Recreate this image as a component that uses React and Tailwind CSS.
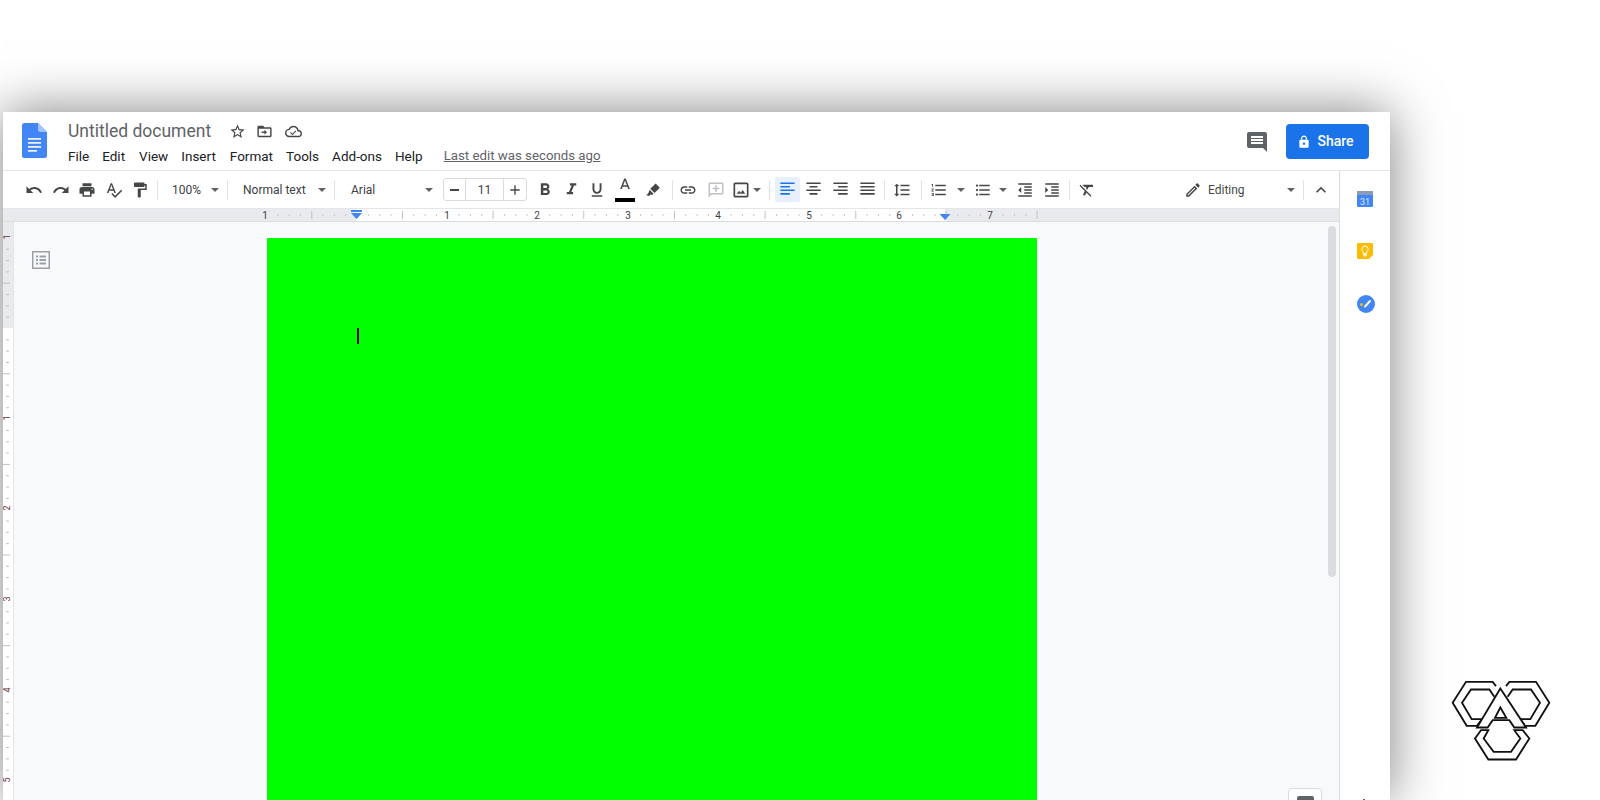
import React from "react";

const P = {
  undo: "M12.5 8c-2.65 0-5.05.99-6.9 2.6L2 7v9h9l-3.62-3.62c1.39-1.16 3.16-1.88 5.12-1.88 3.54 0 6.55 2.31 7.6 5.5l2.37-.78C21.08 11.03 17.15 8 12.5 8z",
  redo: "M18.4 10.6C16.55 8.99 14.15 8 11.5 8c-4.65 0-8.58 3.03-9.96 7.22L3.9 16c1.05-3.19 4.05-5.5 7.6-5.5 1.95 0 3.73.72 5.12 1.88L13 16h9V7l-3.6 3.6z",
  print: "M19 8H5c-1.66 0-3 1.34-3 3v6h4v4h12v-4h4v-6c0-1.66-1.34-3-3-3zm-3 11H8v-5h8v5zm3-7c-.55 0-1-.45-1-1s.45-1 1-1 1 .45 1 1-.45 1-1 1zm-1-9H6v4h12V3z",
  spell: "M12.45 16h2.09L9.43 3H7.57L2.46 16h2.09l1.12-3h5.64l1.14 3zm-6.02-5L8.5 5.48 10.57 11H6.43zm15.16.59l-8.09 8.09L9.83 16l-1.41 1.41 5.09 5.09L23 13l-1.41-1.41z",
  paint: "M18 4V3c0-.55-.45-1-1-1H5c-.55 0-1 .45-1 1v4c0 .55.45 1 1 1h12c.55 0 1-.45 1-1V6h1v4H9v11c0 .55.45 1 1 1h2c.55 0 1-.45 1-1v-9h8V4h-3z",
  bold: "M15.6 10.79c.97-.67 1.65-1.77 1.65-2.79 0-2.26-1.75-4-4-4H7v14h7.04c2.09 0 3.71-1.7 3.71-3.79 0-1.52-.86-2.82-2.15-3.42zM10 6.5h3c.83 0 1.5.67 1.5 1.5s-.67 1.5-1.5 1.5h-3v-3zm3.5 9H10v-3h3.5c.83 0 1.5.67 1.5 1.5s-.67 1.5-1.5 1.500z",
  italic: "M10 4v3h2.21l-3.42 8H6v3h8v-3h-2.21l3.42-8H18V4z",
  underline: "M12 17c3.31 0 6-2.69 6-6V3h-2.5v8c0 1.93-1.57 3.5-3.5 3.5S8.5 12.93 8.5 11V3H6v8c0 3.31 2.69 6 6 6zm-7 2v2h14v-2H5z",
  textColor: "M11 2L5.5 16h2.25l1.12-3h6.25l1.12 3h2.25L13 2h-2zm-1.38 9L12 4.67 14.38 11H9.62z",
  marker: "M15 3.5l6 6-7.5 7.5-6-6zM6.500 12.5l5.5 5.5-1.5 1.5H7l-1 1.5-4-1 3-3.500z",
  link: "M3.9 12c0-1.71 1.39-3.1 3.1-3.1h4V7H7c-2.76 0-5 2.24-5 5s2.24 5 5 5h4v-1.9H7c-1.71 0-3.1-1.39-3.1-3.1zM8 13h8v-2H8v2zm9-6h-4v1.9h4c1.71 0 3.1 1.39 3.1 3.1s-1.39 3.1-3.1 3.1h-4V17h4c2.76 0 5-2.24 5-5s-2.24-5-5-5z",
  comment: "M20 2H4c-1.1 0-2 .9-2 2v18l4-4h14c1.1 0 2-.9 2-2V4c0-1.1-.9-2-2-2zm0 14H5.2L4 17.2V4h16v12zM11 5.5h2V9h3.5v2H13v3.5h-2V11H7.5V9H11z",
  image: "M19 3H5c-1.1 0-2 .9-2 2v14c0 1.1.9 2 2 2h14c1.1 0 2-.9 2-2V5c0-1.1-.9-2-2-2zm0 16H5V5h14v14zM14.1 11.9l-2.6 3.3-1.8-2.2L7 16.5h10z",
  alignLeft: "M3 3h18v2H3zM3 7.5h12v2H3zM3 12h18v2H3zM3 16.5h12v2H3z",
  alignCenter: "M3 3h18v2H3zM7 7.5h10v2H7zM3 12h18v2H3zM7 16.5h10v2H7z",
  alignRight: "M3 3h18v2H3zM9 7.5h12v2H9zM3 12h18v2H3zM9 16.5h12v2H9z",
  justify: "M3 3h18v2H3zM3 7.5h18v2H3zM3 12h18v2H3zM3 16.5h18v2H3z",
  lineSpace: "M6 7h2.5L5 3.5 1.5 7H4v10H1.5L5 20.5 8.5 17H6V7zm4-2v2h12V5H10zm0 14h12v-2H10v2zm0-6h12v-2H10v2z",
  numbered: "M2 17h2v.5H3v1h1v.5H2v1h3v-4H2v1zm1-9h1V4H2v1h1v3zm-1 3h1.8L2 13.1v.9h3v-1H3.2L5 10.9V10H2v1zm5-6v2h14V5H7zm0 14h14v-2H7v2zm0-6h14v-2H7v2z",
  bullets: "M4 10.5c-.83 0-1.5.67-1.5 1.5s.67 1.5 1.5 1.5 1.5-.67 1.5-1.5-.67-1.5-1.5-1.5zm0-6c-.83 0-1.5.67-1.5 1.5S3.17 7.5 4 7.5 5.5 6.83 5.5 6 4.83 4.5 4 4.5zm0 12c-.83 0-1.5.68-1.5 1.5s.68 1.5 1.5 1.5 1.5-.68 1.5-1.5-.67-1.5-1.5-1.5zM7 19h14v-2H7v2zm0-6h14v-2H7v2zm0-8v2h14V5H7z",
  outdent: "M11 17h10v-2H11v2zm-8-5l4 4V8l-4 4zm0 9h18v-2H3v2zM3 3v2h18V3H3zm8 6h10V7H11v2zm0 4h10v-2H11v2z",
  indent: "M3 21h18v-2H3v2zM3 8v8l4-4-4-4zm8 9h10v-2H11v2zM3 3v2h18V3H3zm8 6h10V7H11v2zm0 4h10v-2H11v2z",
  clear: "M3.27 5L2 6.27l6.97 6.97L6.5 19h3l1.57-3.66L16.73 21 18 19.73 3.55 5.27 3.27 5zM6 5v.18L8.82 8h2.4l-.72 1.68 2.1 2.1L14.21 8H20V5H6z",
  pencil: "M14.06 9.02l.92.92L5.92 19H5v-.92l9.06-9.06M17.66 3c-.25 0-.51.1-.7.29l-1.83 1.83 3.75 3.75 1.83-1.83c.39-.39.39-1.02 0-1.41l-2.34-2.34c-.2-.2-.45-.29-.71-.29zm-3.6 3.19L3 17.25V21h3.75L17.81 9.94l-3.75-3.75z",
  chevronUp: "M7.41 15.41L12 10.83l4.59 4.58L18 14l-6-6-6 6z",
  chat: "M21.99 4c0-1.1-.89-2-1.99-2H4c-1.1 0-2 .9-2 2v12c0 1.1.9 2 2 2h14l4 4-.01-18zM18 14H6v-2h12v2zm0-3H6V9h12v2zm0-3H6V6h12v2z",
  lock: "M18 8h-1V6c0-2.76-2.24-5-5-5S7 3.24 7 6v2H6c-1.1 0-2 .9-2 2v10c0 1.1.9 2 2 2h12c1.1 0 2-.9 2-2V10c0-1.1-.9-2-2-2zm-6 9c-1.1 0-2-.9-2-2s.9-2 2-2 2 .9 2 2-.9 2-2 2zm3.1-9H8.9V6c0-1.71 1.39-3.1 3.1-3.1 1.71 0 3.1 1.39 3.1 3.1v2z",
  star: "M22 9.24l-7.19-.62L12 2 9.19 8.63 2 9.24l5.46 4.73L5.82 21 12 17.27 18.18 21l-1.63-7.03L22 9.24zM12 15.4l-3.76 2.27 1-4.28-3.32-2.88 4.38-.38L12 6.1l1.71 4.04 4.38.38-3.32 2.88 1 4.28L12 15.4z",
  folder: "M20 6h-8l-2-2H4c-1.1 0-2 .9-2 2v12c0 1.1.9 2 2 2h16c1.1 0 2-.9 2-2V8c0-1.1-.9-2-2-2zm0 12H4V8h16v10zM8 12h4V9.5l3.5 3.5-3.5 3.5V14H8z",
  cloud: "M19.35 10.04C18.67 6.59 15.64 4 12 4 9.11 4 6.6 5.64 5.35 8.04 2.34 8.36 0 10.91 0 14c0 3.31 2.69 6 6 6h13c2.76 0 5-2.24 5-5 0-2.64-2.05-4.78-4.65-4.96zM19 18H6c-2.21 0-4-1.79-4-4s1.79-4 4-4h.71C7.37 7.69 9.48 6 12 6c3.04 0 5.5 2.46 5.5 5.5v.5H19c1.66 0 3 1.34 3 3s-1.34 3-3 3zM10.5 15l-2.3-2.3-1.1 1.1 3.4 3.4 5.4-5.4-1.1-1.1z",
  outline: "M3 3h18v18H3zM4.500 4.500v15h15v-15zM7 7.500h2v2H7zM10.500 7.500H17v2h-6.500zM7 11h2v2H7zM10.500 11H17v2h-6.500zM7 14.500h2v2H7zM10.500 14.500H17v2h-6.500z",
};

function Icon({ d, size = 18, className = "fill-[#444746]" }) {
  return (
    <svg viewBox="0 0 24 24" width={size} height={size} fillRule="evenodd" className={className}>
      <path d={d} />
    </svg>
  );
}

function Btn({ d, size = 18, className = "", color }) {
  return (
    <div className={`w-[26px] h-[26px] shrink-0 flex items-center justify-center ${className}`}>
      <Icon d={d} size={size} className={color || "fill-[#444746]"} />
    </div>
  );
}

function Caret({ className = "" }) {
  return (
    <div className={`w-[10px] shrink-0 flex justify-center ${className}`}>
      <div className="w-0 h-0 border-l-[4px] border-r-[4px] border-t-[4px] border-l-transparent border-r-transparent border-t-[#5f6368]" />
    </div>
  );
}

function Sep({ className = "" }) {
  return <div className={`w-px h-[20px] bg-[#e0e2e5] shrink-0 ${className}`} />;
}

function HRuler() {
  const zero = 353.6; // svg x of the 0 mark, ruler starts at page x 3
  const ticks = [];
  for (let i = -7; i <= 60; i++) {
    const x = zero + (i * 90.67) / 8;
    if (i % 8 === 0) continue;
    const long = i % 4 === 0;
    ticks.push(<rect key={i} x={x} y={long ? 3 : 6} width="1" height={long ? 8 : 2} fill={long ? "#bdc1c6" : "#c4c7cb"} />);
  }
  const nums = [
    [262, "1"],
    [444, "1"],
    [534, "2"],
    [625, "3"],
    [715, "4"],
    [806, "5"],
    [896, "6"],
    [987, "7"],
  ];
  return (
    <svg width="1336" height="14" className="block shrink-0">
      <rect width="1336" height="14" fill="#e8eaed" />
      <rect x="353" y="0" width="589" height="13" fill="#ffffff" />
      <rect x="0" y="0" width="1336" height="1" fill="#e3e5e8" />
      <rect x="0" y="13" width="1336" height="1" fill="#dadce0" />
      {ticks}
      {nums.map(([x, t], i) => (
        <text key={i} x={x} y="11" textAnchor="middle" fontSize="10" fontFamily="Roboto, sans-serif" fill="#3c4043">
          {t}
        </text>
      ))}
      <path d="M348 2h11v2h-11zM348 5h11l-5.5 6z" fill="#4285f4" />
      <path d="M936.5 6h11l-5.500 6z" fill="#4285f4" />
    </svg>
  );
}

function VRuler() {
  const ticks = [];
  for (let i = -8; i <= 40; i++) {
    const y = 106 + (i * 90.6) / 8;
    if (i % 8 === 0) continue;
    const long = i % 4 === 0;
    ticks.push(<rect key={i} x={long ? 0 : 3} y={y} width={long ? 7 : 3} height="1" fill="#bdc1c6" />);
  }
  const nums = [
    [15, "1"],
    [196, "1"],
    [286, "2"],
    [377, "3"],
    [468, "4"],
    [558, "5"],
  ];
  return (
    <svg width="11" height="578" className="block shrink-0">
      <rect width="11" height="578" fill="#ffffff" />
      <rect width="11" height="106" fill="#e8eaed" />
      <rect x="10" width="1" height="578" fill="#e3e5e8" />
      {ticks}
      {nums.map(([y, t], i) => (
        <text key={i} x="5" y={y} textAnchor="middle" dominantBaseline="middle" fontSize="9" fontFamily="Roboto, sans-serif" fill="#6b2b3a" transform={`rotate(-90 5 ${y})`}>
          {t}
        </text>
      ))}
    </svg>
  );
}

function DocsLogo() {
  return (
    <svg width="25" height="35" viewBox="0 0 25 35" className="shrink-0">
      <path d="M2.5 0H16l9 9v23.500a2.500 2.500 0 0 1-2.500 2.500h-20A2.500 2.500 0 0 1 0 32.500v-30A2.500 2.500 0 0 1 2.500 0z" fill="#4285f4" />
      <path d="M16 0l9 9h-6.500A2.500 2.500 0 0 1 16 6.500z" fill="#a1c2fa" />
      <path d="M6 15h13v1.800H6zM6 19h13v1.800H6zM6 23h13v1.800H6zM6 27h9v1.800H6z" fill="#f1f1f1" />
    </svg>
  );
}

function HexLogo() {
  const bands = [
    "M285 108L275 95H195L155 158L197 227H228L243 207H212L183 158L210 118H265L280 140",
    "M315 108L325 95H405L445 158L403 227H372L357 207H388L417 158L390 118H335L320 140",
    "M240 240L222 265L262 328H345L385 265L365 240H340L358 265L330 305H278L248 265L262 240Z",
  ];
  return (
    <svg viewBox="150 90 300 245" width="100" height="82" className="absolute left-[1451px] top-[680px]">
      {bands.map((d) => (
        <path key={d} d={d} fill="none" stroke="#111" strokeWidth="5.5" />
      ))}
      <path d="M298 115L318 145L375 232H340L325 210H275L260 232H228L280 145Z" fill="#fff" stroke="#111" strokeWidth="5.5" />
      <path d="M298 172L282 203H316Z" fill="#fff" stroke="#111" strokeWidth="5.5" />
    </svg>
  );
}

function Header() {
  const menu = [
    ["File", "ml-0"],
    ["Edit", "ml-[13px]"],
    ["View", "ml-[14px]"],
    ["Insert", "ml-[13px]"],
    ["Format", "ml-[14px]"],
    ["Tools", "ml-[13px]"],
    ["Add-ons", "ml-[13px]"],
    ["Help", "ml-[13px]"],
  ];
  return (
    <div className="h-[59px] shrink-0 flex items-start border-b border-[#e3e5e8] pl-[19px] pr-[21px]">
      <div className="mt-[11px]">
        <DocsLogo />
      </div>
      <div className="ml-[21px] flex flex-col">
        <div className="flex items-center h-[20px] mt-[9px]">
          <span className="text-[17.500px] leading-[20px] text-[#5f6368] w-[160px]">Untitled document</span>
          <Icon d={P.star} size={17} className="fill-[#444746] ml-[1px]" />
          <Icon d={P.folder} size={17} className="fill-[#444746] ml-[10px]" />
          <Icon d={P.cloud} size={17} className="fill-[#444746] ml-[12px]" />
        </div>
        <div className="flex items-center h-[20px] mt-[5px] text-[13.500px] leading-[20px] text-[#202124]">
          {menu.map(([t, c]) => (
            <span key={t} className={c}>{t}</span>
          ))}
          <span className="ml-[21px] text-[13.250px] text-[#5f6368] underline">Last edit was seconds ago</span>
        </div>
      </div>
      <div className="ml-auto flex items-center mt-[12px]">
        <Icon d={P.chat} size={24} className="fill-[#5f6368]" />
        <button className="ml-[17px] w-[83px] h-[35px] rounded-[4px] bg-[#1a73e8] text-white text-[14px] font-medium flex items-center justify-center gap-[6px] pr-[4px]">
          <Icon d={P.lock} size={14} className="fill-white" />
          Share
        </button>
      </div>
    </div>
  );
}

function Toolbar() {
  return (
    <div className="h-[37px] shrink-0 flex items-center pl-[18px] pr-[8px] text-[12px] text-[#3c4043]">
      <Btn d={P.undo} />
      <Btn d={P.redo} className="ml-px" />
      <Btn d={P.print} />
      <Btn d={P.spell} className="ml-px" />
      <Btn d={P.paint} />
      <Sep className="ml-[4px]" />
      <span className="ml-[14px] w-[38px]">100%</span>
      <Caret />
      <Sep className="ml-[7px]" />
      <span className="ml-[15px] w-[74px]">Normal text</span>
      <Caret />
      <Sep className="ml-[7px]" />
      <span className="ml-[16px] w-[73px]">Arial</span>
      <Caret />
      <div className="ml-[9px] w-[84px] h-[23px] border border-[#dadce0] rounded-[3px] flex items-center shrink-0">
        <div className="w-[22px] h-full flex items-center justify-center border-r border-[#dadce0]">
          <div className="w-[9px] h-[2px] bg-[#444746]" />
        </div>
        <div className="flex-1 text-center text-[12px] text-[#3c4043]">11</div>
        <div className="w-[23px] h-full flex items-center justify-center border-l border-[#dadce0]">
          <Icon d="M19 13h-6v6h-2v-6H5v-2h6V5h2v6h6v2z" size={16} />
        </div>
      </div>
      <Btn d={P.bold} size={20} className="ml-[5px]" />
      <Btn d={P.italic} size={19} />
      <Btn d={P.underline} size={18} />
      <div className="ml-[2px] w-[26px] h-[26px] flex flex-col items-center justify-start shrink-0">
        <Icon d={P.textColor} size={18} />
        <div className="w-[20px] h-[4px] bg-black mt-[3px]" />
      </div>
      <Btn d={P.marker} size={17} className="ml-[2px]" />
      <Sep className="ml-[6px]" />
      <Btn d={P.link} className="ml-[2px]" />
      <Btn d={P.comment} className="ml-[2px]" color="fill-[#bdc1c6]" />
      <Btn d={P.image} size={20} className="-ml-px" />
      <Caret className="-ml-[2px]" />
      <Sep className="ml-[7px]" />
      <div className="ml-[5px] w-[25px] h-[25px] bg-[#e8f0fe] rounded-[2px] flex items-center justify-center shrink-0">
        <Icon d={P.alignLeft} size={19} className="fill-[#1a73e8]" />
      </div>
      <Btn d={P.alignCenter} size={19} />
      <Btn d={P.alignRight} size={19} className="ml-px" />
      <Btn d={P.justify} size={19} className="ml-px" />
      <Sep className="ml-[4px]" />
      <Btn d={P.lineSpace} className="ml-[4px]" />
      <Sep className="ml-[6px]" />
      <Btn d={P.numbered} className="ml-[4px]" />
      <Caret className="ml-[4px]" />
      <Btn d={P.bullets} className="ml-[4px]" />
      <Caret className="ml-[2px]" />
      <Btn d={P.outdent} size={18} className="ml-[4px]" />
      <Btn d={P.indent} size={18} className="ml-px" />
      <Sep className="ml-[4px]" />
      <Btn d={P.clear} className="ml-[4px]" />
      <div className="ml-auto flex items-center">
        <Icon d={P.pencil} size={18} className="fill-[#444746]" />
        <span className="ml-[6px] w-[78px] text-[#444746]">Editing</span>
        <Caret />
        <Sep className="ml-[7px]" />
        <div className="ml-[7px] w-[20px] flex justify-center">
          <Icon d={P.chevronUp} size={22} />
        </div>
      </div>
    </div>
  );
}

function SidePanel() {
  return (
    <div className="w-[51px] shrink-0 border-l border-[#dadce0] flex flex-col items-center relative">
      <svg width="16" height="16" viewBox="0 0 16 16" className="mt-[20px]">
        <rect width="16" height="16" rx="1" fill="#4285f4" />
        <rect width="16" height="4" fill="#8a9bb8" />
        <text x="8" y="13.500" textAnchor="middle" fontSize="9" fontFamily="Roboto, sans-serif" fill="#dbe7fd">31</text>
      </svg>
      <svg width="16" height="16" viewBox="0 0 16 16" className="mt-[36px]">
        <path d="M1 0h14a1 1 0 0 1 1 1v11l-4 4H1a1 1 0 0 1-1-1V1a1 1 0 0 1 1-1z" fill="#fbbc04" />
        <path d="M8 3a3.200 3.200 0 0 0-1.800 5.800V10.500h3.600V8.800A3.200 3.200 0 0 0 8 3zM6.800 11.500h2.400V13H6.800z" fill="none" stroke="#fff" strokeWidth="1" />
      </svg>
      <svg width="18" height="18" viewBox="0 0 18 18" className="mt-[36px] ml-[2px]">
        <circle cx="9" cy="9" r="9" fill="#4285f4" />
        <path d="M8 11.500l5-5.500" stroke="#fff" strokeWidth="2" strokeLinecap="round" />
        <circle cx="4.500" cy="9.500" r="1.500" fill="#fbbc04" />
      </svg>
      <div className="absolute left-[23px] top-[628px] w-[2px] h-[2px] bg-[#5f6368]" />
    </div>
  );
}

export default function App() {
  return (
    <div className="w-[1600px] h-[800px] bg-white overflow-hidden relative pt-[112px] pl-[3px]" style={{ fontFamily: "Roboto, 'Liberation Sans', sans-serif" }}>
      <div className="w-[1387px] h-[688px] bg-white flex flex-col shadow-[0_0_50px_rgba(0,0,0,0.5)]">
        <Header />
        <div className="flex flex-1 min-h-0">
          <div className="w-[1336px] flex flex-col">
            <Toolbar />
            <HRuler />
            <div className="flex flex-1 bg-[#f8f9fa] relative overflow-hidden">
              <VRuler />
              <div className="pl-[15px] pt-[26px] w-[253px] shrink-0">
                <Icon d={P.outline} size={24} className="fill-[#9aa0a6]" />
              </div>
              <div className="w-[770px] h-[800px] mt-[16px] bg-[#00ff00] shrink-0 pl-[90px] pt-[90px]">
                <div className="w-[2px] h-[16px] bg-black" />
              </div>
              <div className="absolute left-[1325px] top-[4px] w-[8px] h-[351px] rounded-full bg-[#dadce0]" />
              <div className="absolute left-[1285px] top-[566px] w-[34px] h-[40px] bg-white border border-[#dadce0] rounded-[4px] flex justify-center pt-[7px]">
                <div className="w-[17px] h-[20px] rounded-[2px] bg-[#5f6368]" />
              </div>
            </div>
          </div>
          <SidePanel />
        </div>
      </div>
      <HexLogo />
    </div>
  );
}
